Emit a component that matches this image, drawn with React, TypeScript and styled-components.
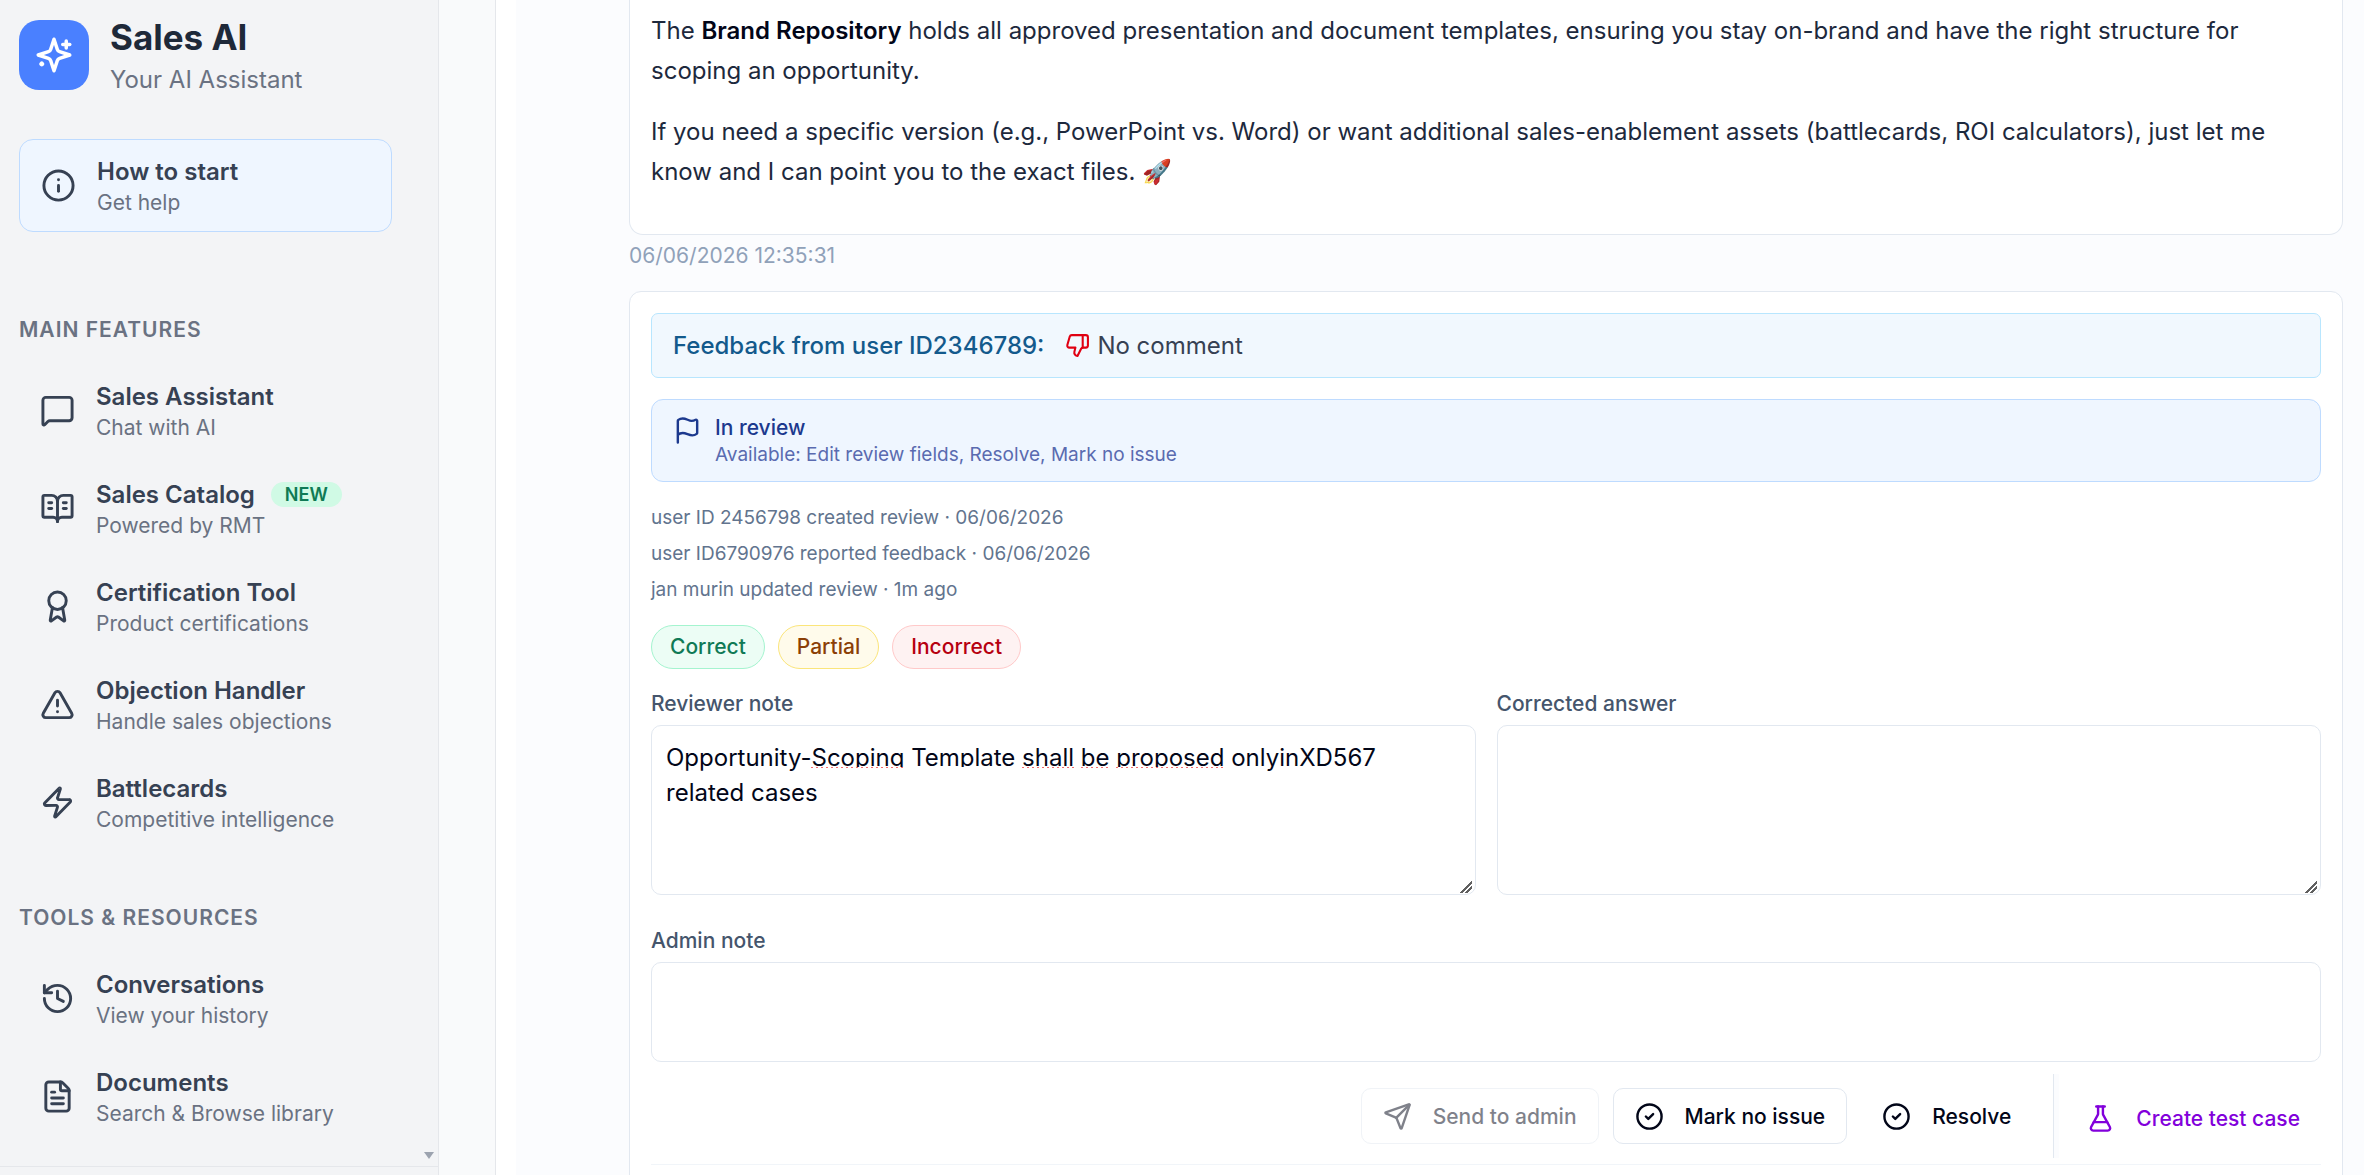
import React, { useLayoutEffect, useRef, useState } from "react";
import styled, { createGlobalStyle, css } from "styled-components";
import {
  Award,
  BookOpenText,
  CircleCheck,
  FileText,
  Flag,
  FlaskConical,
  History,
  Info,
  type LucideIcon,
  MessageSquare,
  Send,
  ThumbsDown,
  TriangleAlert,
  Zap,
} from "lucide-react";

const FONT = `Inter, "Liberation Sans", sans-serif`;

const GlobalStyle = createGlobalStyle`
  *, *::before, *::after { box-sizing: border-box; }
  body {
    margin: 0;
    background: #ffffff;
    color: #1d293d;
    font-family: ${FONT};
    font-size: 24px;
    overflow: hidden;
  }
  h1, h2, p, ul { margin: 0; padding: 0; }
  ul { list-style: none; }
  button, textarea { font-family: inherit; }
  svg { flex: none; display: block; }
`;

/* ---------- shell ---------- */

const Shell = styled.div`
  display: flex;
  height: 100vh;
  overflow: hidden;
`;

const Sidebar = styled.aside`
  display: flex;
  flex-direction: column;
  flex: none;
  width: 439px;
  background: #f3f4f6;
  border-right: 1px solid #e5e7eb;
`;

const SidebarScroll = styled.div`
  display: flex;
  flex: 1;
  min-height: 0;
  overflow: hidden;
`;

const SidebarContent = styled.div`
  flex: 1;
  min-width: 0;
  padding: 20px 27px 0 19px;
`;

const ScrollTrack = styled.div`
  display: flex;
  align-items: flex-end;
  justify-content: center;
  width: 19px;
  padding-bottom: 7px;
`;

const ScrollArrow = styled.span`
  border: 5px solid transparent;
  border-top: 7px solid #9ca3af;
  border-bottom: 0;
`;

const SidebarFooter = styled.div`
  height: 9px;
  border-top: 1px solid #e5e7eb;
`;

const Gutter = styled.div`
  flex: none;
  width: 57px;
  background: #f9fafb;
  border-right: 1px solid #e5e7eb;
`;

/* ---------- sidebar ---------- */

const Brand = styled.header`
  display: flex;
  gap: 21px;
`;

const BrandMark = styled.div`
  display: grid;
  place-items: center;
  width: 70px;
  height: 70px;
  border-radius: 20px;
  background: #4a80ff;
  color: #ffffff;
`;

const BrandName = styled.h1`
  color: #1e2939;
  font-size: 35px;
  font-weight: 700;
  line-height: 35px;
`;

const BrandTagline = styled.p`
  margin-top: 7px;
  color: #6a7282;
  font-size: 24px;
  line-height: 35px;
`;

const NavButton = styled.button<{ $boxed?: boolean }>`
  display: flex;
  align-items: center;
  gap: 21px;
  width: 100%;
  padding: 14px 21px;
  border: 0;
  border-radius: 14px;
  background: transparent;
  color: #364153;
  text-align: left;
  cursor: pointer;
  ${(p) =>
    p.$boxed &&
    css`
      margin-top: 42px;
      border: 1px solid #bedbff;
      background: #eff6ff;
    `}
`;

const NavText = styled.span`
  display: flex;
  flex-direction: column;
`;

const NavTitle = styled.span`
  display: flex;
  align-items: center;
  gap: 16px;
  font-size: 24px;
  font-weight: 600;
  line-height: 35px;
`;

const NavHint = styled.span`
  color: #6a7282;
  font-size: 21px;
  line-height: 28px;
`;

const Badge = styled.span`
  padding: 0 14px;
  border-radius: 13px;
  background: #d0fae5;
  color: #0f7a55;
  font-size: 18px;
  font-weight: 600;
  line-height: 25px;
`;

const NavSection = styled.section<{ $first?: boolean }>`
  margin-top: ${(p) => (p.$first ? 84 : 56)}px;
`;

const NavHeading = styled.h2`
  margin-bottom: 21px;
  color: #6a7282;
  font-size: 21px;
  font-weight: 600;
  letter-spacing: 1px;
  line-height: 28px;
  text-transform: uppercase;
`;

const NavList = styled.ul`
  display: flex;
  flex-direction: column;
  gap: 7px;
`;

/* ---------- conversation ---------- */

const Main = styled.main`
  flex: 1;
  min-width: 0;
  padding: 0 10px 0 20px;
  background: #ffffff;
`;

const Thread = styled.div`
  height: 100%;
  padding: 0 21px 0 113px;
  overflow: hidden;
  background: #fbfcfe;
`;

const Message = styled.article`
  display: flex;
  flex-direction: column;
  gap: 21px;
  padding: 11px 21px 42px;
  border: 1px solid #e2e8f0;
  border-top: 0;
  border-radius: 0 0 14px 14px;
  background: #ffffff;
  color: #1d293d;
  font-size: 24px;
  line-height: 40px;

  strong {
    color: #020618;
    font-weight: 600;
  }
`;

const Timestamp = styled.time`
  display: block;
  margin: 7px 0 21px;
  color: #90a1b9;
  font-size: 21px;
  line-height: 28px;
`;

const ReviewCard = styled.section`
  display: flex;
  flex-direction: column;
  gap: 21px;
  min-height: 100%;
  padding: 21px;
  border: 1px solid #e2e8f0;
  border-radius: 12px;
  background: #ffffff;
`;

const FeedbackBar = styled.div`
  display: flex;
  align-items: center;
  padding: 14px 21px;
  border: 1px solid #b8e6fe;
  border-radius: 7px;
  background: #f1f8fe;
  color: #364153;
  font-size: 24px;
  line-height: 35px;

  strong {
    margin-right: 21px;
    color: #135a8c;
    font-weight: 500;
  }
  svg {
    margin-right: 7px;
    color: #e00012;
  }
`;

const StatusBar = styled.div`
  display: flex;
  gap: 13px;
  padding: 14px 21px;
  border: 1px solid #bedbff;
  border-radius: 12px;
  background: #eff6ff;
  color: #1c398e;

  svg {
    margin-top: 2px;
  }
`;

const StatusTitle = styled.p`
  font-size: 21px;
  font-weight: 500;
  line-height: 28px;
`;

const StatusHint = styled.p`
  color: #5a6bb0;
  font-size: 19px;
  line-height: 25px;
`;

const EventList = styled.ul`
  display: flex;
  flex-direction: column;
  gap: 7px;
  color: #62748e;
  font-size: 19px;
  line-height: 29px;
`;

const Verdicts = styled.div`
  display: flex;
  gap: 13px;
`;

const verdictTones = {
  green: css`
    border-color: #a4f4cf;
    background: #ecfdf5;
    color: #0f7a55;
  `,
  amber: css`
    border-color: #fbe57a;
    background: #fffbeb;
    color: #8b3f06;
  `,
  red: css`
    border-color: #ffc9c9;
    background: #fef2f2;
    color: #b60010;
  `,
};

const Verdict = styled.button<{ $tone: keyof typeof verdictTones }>`
  padding: 0 18px;
  border: 1px solid;
  border-radius: 22px;
  font-size: 21px;
  font-weight: 500;
  line-height: 42px;
  cursor: pointer;
  ${(p) => verdictTones[p.$tone]}
`;

const FieldRow = styled.div`
  display: grid;
  grid-template-columns: 1fr 1fr;
  gap: 21px;
  padding-bottom: 11px;
`;

const Field = styled.div`
  display: flex;
  flex-direction: column;
  gap: 7px;
`;

const FieldLabel = styled.label`
  color: #45556c;
  font-size: 21px;
  font-weight: 500;
  line-height: 28px;
`;

const TextBox = styled.textarea<{ $fixed?: boolean }>`
  display: block;
  width: 100%;
  height: ${(p) => (p.$fixed ? 100 : 170)}px;
  padding: 14px;
  border: 1px solid #e2e8f0;
  border-radius: 10px;
  outline: 0;
  background: #ffffff;
  color: #020618;
  font-size: 24px;
  line-height: 35px;
  resize: ${(p) => (p.$fixed ? "none" : "vertical")};

  &::-webkit-resizer {
    background: linear-gradient(
        135deg,
        transparent 8px,
        #606060 8px 10px,
        transparent 10px 12px,
        #606060 12px 14px,
        transparent 14px
      )
      0 2px / 12px 12px no-repeat;
  }
`;

const SpellFrame = styled.div`
  position: relative;
`;

const SpellMark = styled.span<{ $flagged: boolean }>`
  position: absolute;
  top: 42px;
  height: 7px;
  background: ${(p) =>
      p.$flagged
        ? "repeating-linear-gradient(90deg, #f26a6a 0 2px, #ffffff 2px 5px) top / 100% 1px no-repeat,"
        : ""}
    #ffffff;
  pointer-events: none;
`;

const ActionBar = styled.div`
  display: flex;
  align-items: center;
  justify-content: flex-end;
  gap: 14px;
  margin-top: -9px;
  padding-bottom: 6px;
  border-bottom: 1px solid #f1f5f9;
`;

const TestCaseSlot = styled.div`
  display: flex;
  align-items: center;
  height: 84px;
  margin-left: 7px;
  padding: 4px 0 0 11px;
  border-left: 1px solid #e2e8f0;
  box-shadow: inset 5px 0 0 #fbfcfe;
`;

const ActionButton = styled.button<{ $outlined?: boolean; $accent?: boolean }>`
  display: flex;
  align-items: center;
  gap: 21px;
  height: 56px;
  padding: 0 ${(p) => (p.$outlined ? 21 : 20)}px;
  border: 1px solid ${(p) => (p.$outlined ? "#e2e8f0" : "transparent")};
  border-radius: 10px;
  background: #ffffff;
  color: ${(p) => (p.$accent ? "#8200db" : "#020618")};
  font-size: 21px;
  font-weight: 500;
  cursor: pointer;

  &:disabled {
    opacity: 0.5;
    cursor: default;
  }
`;

/* ---------- data ---------- */

type NavItem = { icon: LucideIcon; title: string; hint: string; badge?: string };

const sections: { heading: string; items: NavItem[] }[] = [
  {
    heading: "Main features",
    items: [
      { icon: MessageSquare, title: "Sales Assistant", hint: "Chat with AI" },
      { icon: BookOpenText, title: "Sales Catalog", hint: "Powered by RMT", badge: "NEW" },
      { icon: Award, title: "Certification Tool", hint: "Product certifications" },
      { icon: TriangleAlert, title: "Objection Handler", hint: "Handle sales objections" },
      { icon: Zap, title: "Battlecards", hint: "Competitive intelligence" },
    ],
  },
  {
    heading: "Tools & resources",
    items: [
      { icon: History, title: "Conversations", hint: "View your history" },
      { icon: FileText, title: "Documents", hint: "Search & Browse library" },
    ],
  },
];

const events = [
  "user ID 2456798 created review · 06/06/2026",
  "user ID6790976 reported feedback · 06/06/2026",
  "jan murin updated review · 1m ago",
];

const reviewerNote =
  "Opportunity-Scoping Template shall be proposed onlyinXD567 related cases";

const spellRanges = [
  { word: "Scoping", flagged: true },
  { word: "Template", flagged: false },
  { word: "shall", flagged: true },
  { word: "be", flagged: true },
  { word: "proposed", flagged: true },
];

/* ---------- components ---------- */

function SparklesIcon() {
  return (
    <svg
      width="42"
      height="42"
      viewBox="0 0 24 24"
      fill="none"
      stroke="currentColor"
      strokeWidth="2"
      strokeLinecap="round"
      strokeLinejoin="round"
      aria-hidden="true"
    >
      <path d="m12 3-1.912 5.813a2 2 0 0 1-1.275 1.275L3 12l5.813 1.912a2 2 0 0 1 1.275 1.275L12 21l1.912-5.813a2 2 0 0 1 1.275-1.275L21 12l-5.813-1.912a2 2 0 0 1-1.275-1.275L12 3Z" />
      <path d="M19 4v4" />
      <path d="M21 6h-4" />
      <path d="M5 16.6v1" />
      <path d="M5.5 17.1h-1" />
    </svg>
  );
}

function NavEntry({ item, boxed }: { item: NavItem; boxed?: boolean }) {
  const Icon = item.icon;
  return (
    <NavButton type="button" $boxed={boxed}>
      <Icon size={35} />
      <NavText>
        <NavTitle>
          {item.title}
          {item.badge && <Badge>{item.badge}</Badge>}
        </NavTitle>
        <NavHint>{item.hint}</NavHint>
      </NavText>
    </NavButton>
  );
}

/* Text box whose first line carries spell-check marks, placed from measured text. */
function SpellCheckedBox({ id, initial }: { id: string; initial: string }) {
  const [value, setValue] = useState(initial);
  const [marks, setMarks] = useState<{ left: number; width: number; flagged: boolean }[]>([]);
  const box = useRef<HTMLTextAreaElement>(null);

  useLayoutEffect(() => {
    const ctx = document.createElement("canvas").getContext("2d");
    if (!ctx || !box.current) return;
    const style = getComputedStyle(box.current);
    ctx.font = `${style.fontSize} ${style.fontFamily}`;
    const inset = parseFloat(style.paddingLeft) + parseFloat(style.borderLeftWidth);
    setMarks(
      spellRanges
        .filter((r) => value.includes(r.word))
        .map((r) => ({
          left: Math.round(inset + ctx.measureText(value.slice(0, value.indexOf(r.word))).width),
          width: Math.round(ctx.measureText(r.word).width),
          flagged: r.flagged,
        })),
    );
  }, [value]);

  return (
    <SpellFrame>
      <TextBox
        id={id}
        ref={box}
        value={value}
        spellCheck={false}
        onChange={(e) => setValue(e.target.value)}
      />
      {marks.map((m) => (
        <SpellMark key={m.left} $flagged={m.flagged} style={{ left: m.left, width: m.width }} />
      ))}
    </SpellFrame>
  );
}

export default function App() {
  return (
    <>
      <GlobalStyle />
      <Shell>
        <Sidebar>
          <SidebarScroll>
            <SidebarContent>
              <Brand>
                <BrandMark>
                  <SparklesIcon />
                </BrandMark>
                <div>
                  <BrandName>Sales AI</BrandName>
                  <BrandTagline>Your AI Assistant</BrandTagline>
                </div>
              </Brand>
              <NavEntry boxed item={{ icon: Info, title: "How to start", hint: "Get help" }} />
              {sections.map((section, i) => (
                <NavSection key={section.heading} $first={i === 0}>
                  <NavHeading>{section.heading}</NavHeading>
                  <NavList>
                    {section.items.map((item) => (
                      <li key={item.title}>
                        <NavEntry item={item} />
                      </li>
                    ))}
                  </NavList>
                </NavSection>
              ))}
            </SidebarContent>
            <ScrollTrack>
              <ScrollArrow />
            </ScrollTrack>
          </SidebarScroll>
          <SidebarFooter />
        </Sidebar>
        <Gutter />
        <Main>
          <Thread>
            <Message>
              <p>
                The <strong>Brand Repository</strong> holds all approved presentation and document
                templates, ensuring you stay on-brand and have the right structure for scoping an
                opportunity.
              </p>
              <p>
                If you need a specific version (e.g., PowerPoint vs. Word) or want additional
                sales-enablement assets (battlecards, ROI calculators), just let me know and I can
                point you to the exact files. 🚀
              </p>
            </Message>
            <Timestamp>06/06/2026 12:35:31</Timestamp>
            <ReviewCard>
              <FeedbackBar>
                <strong>Feedback from user ID2346789:</strong>
                <ThumbsDown size={25} />
                <span>No comment</span>
              </FeedbackBar>
              <StatusBar>
                <Flag size={29} />
                <div>
                  <StatusTitle>In review</StatusTitle>
                  <StatusHint>Available: Edit review fields, Resolve, Mark no issue</StatusHint>
                </div>
              </StatusBar>
              <EventList>
                {events.map((event) => (
                  <li key={event}>{event}</li>
                ))}
              </EventList>
              <Verdicts>
                <Verdict type="button" $tone="green">
                  Correct
                </Verdict>
                <Verdict type="button" $tone="amber">
                  Partial
                </Verdict>
                <Verdict type="button" $tone="red">
                  Incorrect
                </Verdict>
              </Verdicts>
              <FieldRow>
                <Field>
                  <FieldLabel htmlFor="reviewer-note">Reviewer note</FieldLabel>
                  <SpellCheckedBox id="reviewer-note" initial={reviewerNote} />
                </Field>
                <Field>
                  <FieldLabel htmlFor="corrected-answer">Corrected answer</FieldLabel>
                  <TextBox id="corrected-answer" />
                </Field>
              </FieldRow>
              <Field>
                <FieldLabel htmlFor="admin-note">Admin note</FieldLabel>
                <TextBox id="admin-note" $fixed />
              </Field>
              <ActionBar>
                <ActionButton type="button" $outlined disabled>
                  <Send size={29} />
                  Send to admin
                </ActionButton>
                <ActionButton type="button" $outlined>
                  <CircleCheck size={29} />
                  Mark no issue
                </ActionButton>
                <ActionButton type="button">
                  <CircleCheck size={29} />
                  Resolve
                </ActionButton>
                <TestCaseSlot>
                  <ActionButton type="button" $accent>
                    <FlaskConical size={29} />
                    Create test case
                  </ActionButton>
                </TestCaseSlot>
              </ActionBar>
            </ReviewCard>
          </Thread>
        </Main>
      </Shell>
    </>
  );
}
